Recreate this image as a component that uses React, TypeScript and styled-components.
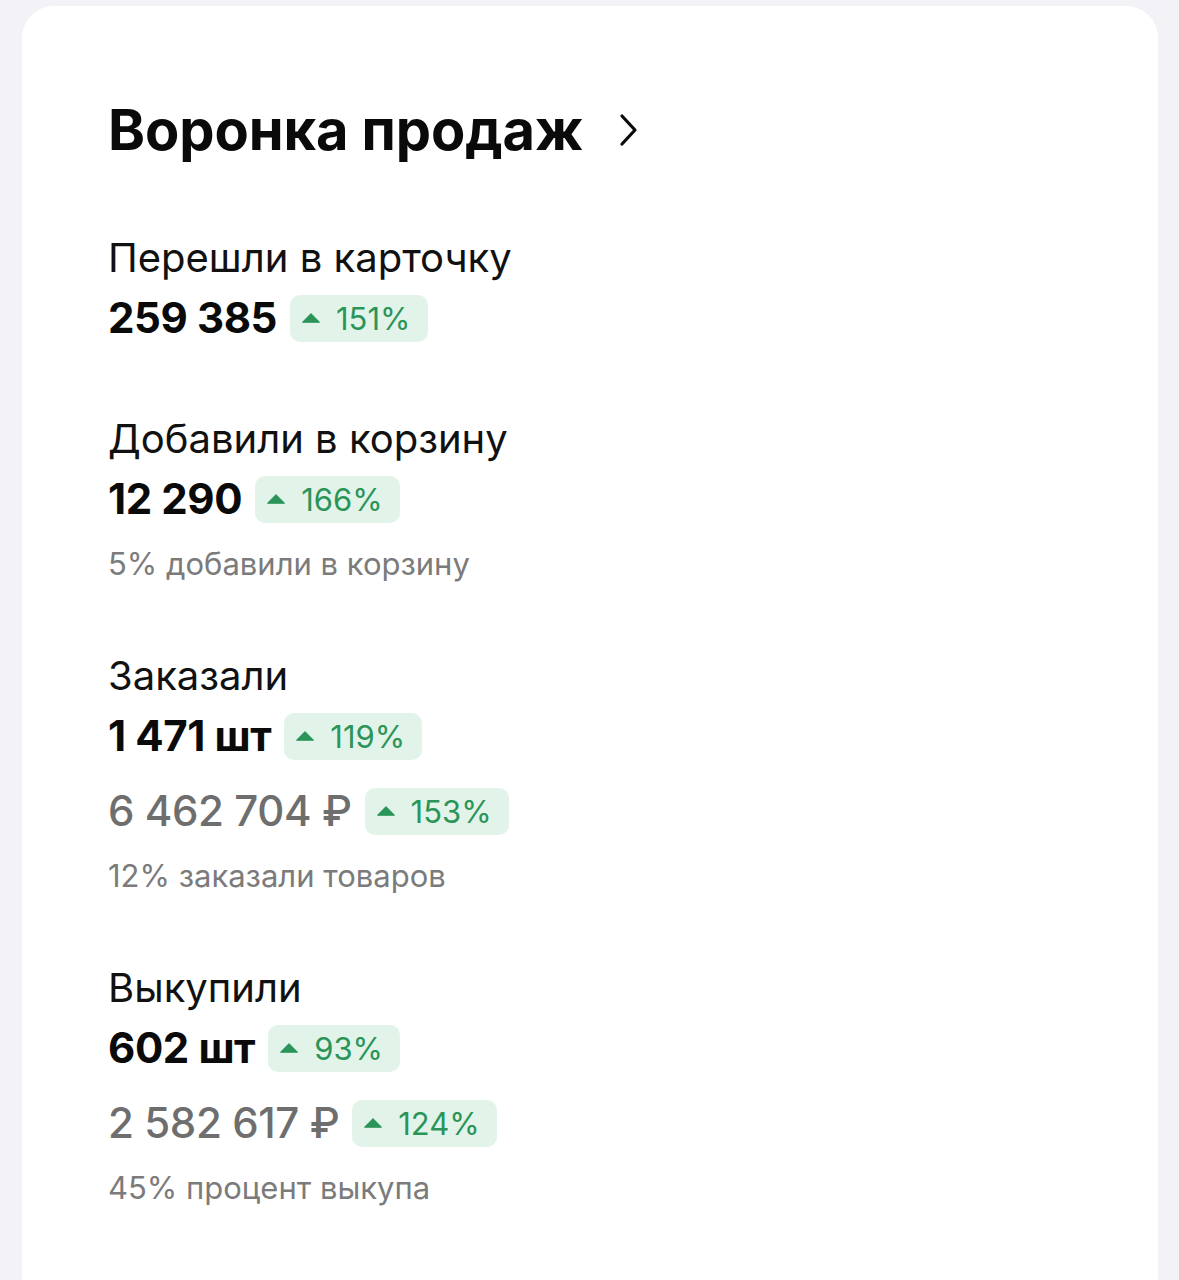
import React from "react";
import styled, { createGlobalStyle } from "styled-components";

const GlobalStyle = createGlobalStyle`
  html, body {
    margin: 0;
    padding: 0;
    background: #f3f3f7;
  }
  body {
    font-family: Inter, "Noto Sans", "Liberation Sans", sans-serif;
    -webkit-font-smoothing: antialiased;
  }
`;

type Metric = {
  value: string;
  change: string;
  muted?: boolean;
};

type Stage = {
  label: string;
  metrics: Metric[];
  note?: string;
};

const stages: Stage[] = [
  {
    label: "Перешли в карточку",
    metrics: [{ value: "259 385", change: "151%" }],
  },
  {
    label: "Добавили в корзину",
    metrics: [{ value: "12 290", change: "166%" }],
    note: "5% добавили в корзину",
  },
  {
    label: "Заказали",
    metrics: [
      { value: "1 471 шт", change: "119%" },
      { value: "6 462 704 ₽", change: "153%", muted: true },
    ],
    note: "12% заказали товаров",
  },
  {
    label: "Выкупили",
    metrics: [
      { value: "602 шт", change: "93%" },
      { value: "2 582 617 ₽", change: "124%", muted: true },
    ],
    note: "45% процент выкупа",
  },
];

const Page = styled.div`
  padding: 6px 21px 0 22px;
`;

const Card = styled.section`
  background: #ffffff;
  border-radius: 32px 32px 0 0;
  padding: 92px 86px 72px;
  min-height: 1182px;
  box-sizing: border-box;
`;

const Header = styled.div`
  display: flex;
  align-items: center;
  gap: 36px;
  height: 64px;
`;

const Title = styled.h1`
  margin: 0;
  font-size: 56px;
  font-weight: 700;
  letter-spacing: -0.1px;
  color: #0a0a0a;
  line-height: 64px;
`;

const Stages = styled.div`
  display: flex;
  flex-direction: column;
  gap: 68px;
  margin-top: 72px;
`;

const StageBlock = styled.div<{ $bare?: boolean }>`
  display: flex;
  flex-direction: column;
  padding-bottom: ${(p) => (p.$bare ? "5px" : "0")};
`;

const Label = styled.div`
  font-size: 40px;
  line-height: 48px;
  color: #111111;
`;

const ValueRow = styled.div<{ $muted?: boolean }>`
  display: flex;
  align-items: center;
  gap: 13px;
  height: 48px;
  margin-top: ${(p) => (p.$muted ? "27px" : "12px")};
`;

const Value = styled.span<{ $muted?: boolean }>`
  font-size: ${(p) => (p.$muted ? "42px" : "42px")};
  font-weight: ${(p) => (p.$muted ? 500 : 700)};
  color: ${(p) => (p.$muted ? "#6e6e6e" : "#0a0a0a")};
  letter-spacing: -0.4px;
  line-height: 48px;
`;

const Badge = styled.span`
  display: inline-flex;
  align-items: center;
  gap: 16px;
  height: 47px;
  padding: 0 17px 0 12px;
  border-radius: 10px;
  background: #e2f4e9;
  color: #2b9459;
  font-size: 31px;
  line-height: 47px;
`;

const Note = styled.div`
  margin-top: 21px;
  font-size: 31px;
  line-height: 40px;
  color: #7b7b7b;
`;

const Chevron = () => (
  <svg width="20" height="34" viewBox="0 0 20 34" fill="none">
    <path
      d="M3 3 L16 17 L3 31"
      stroke="#0a0a0a"
      strokeWidth="3.2"
      strokeLinecap="round"
      strokeLinejoin="round"
    />
  </svg>
);

const UpArrow = () => (
  <svg width="18" height="10" viewBox="0 0 18 10">
    <path d="M9 0.8 L17.2 9.2 H0.8 Z" fill="#2b9459" stroke="#2b9459" strokeWidth="1.2" strokeLinejoin="round" />
  </svg>
);

export default function App() {
  return (
    <>
      <GlobalStyle />
      <Page>
        <Card>
          <Header>
            <Title>Воронка продаж</Title>
            <Chevron />
          </Header>
          <Stages>
            {stages.map((stage) => (
              <StageBlock key={stage.label} $bare={!stage.note}>
                <Label>{stage.label}</Label>
                {stage.metrics.map((m) => (
                  <ValueRow key={m.value} $muted={m.muted}>
                    <Value $muted={m.muted}>{m.value}</Value>
                    <Badge>
                      <UpArrow />
                      {m.change}
                    </Badge>
                  </ValueRow>
                ))}
                {stage.note && <Note>{stage.note}</Note>}
              </StageBlock>
            ))}
          </Stages>
        </Card>
      </Page>
    </>
  );
}
